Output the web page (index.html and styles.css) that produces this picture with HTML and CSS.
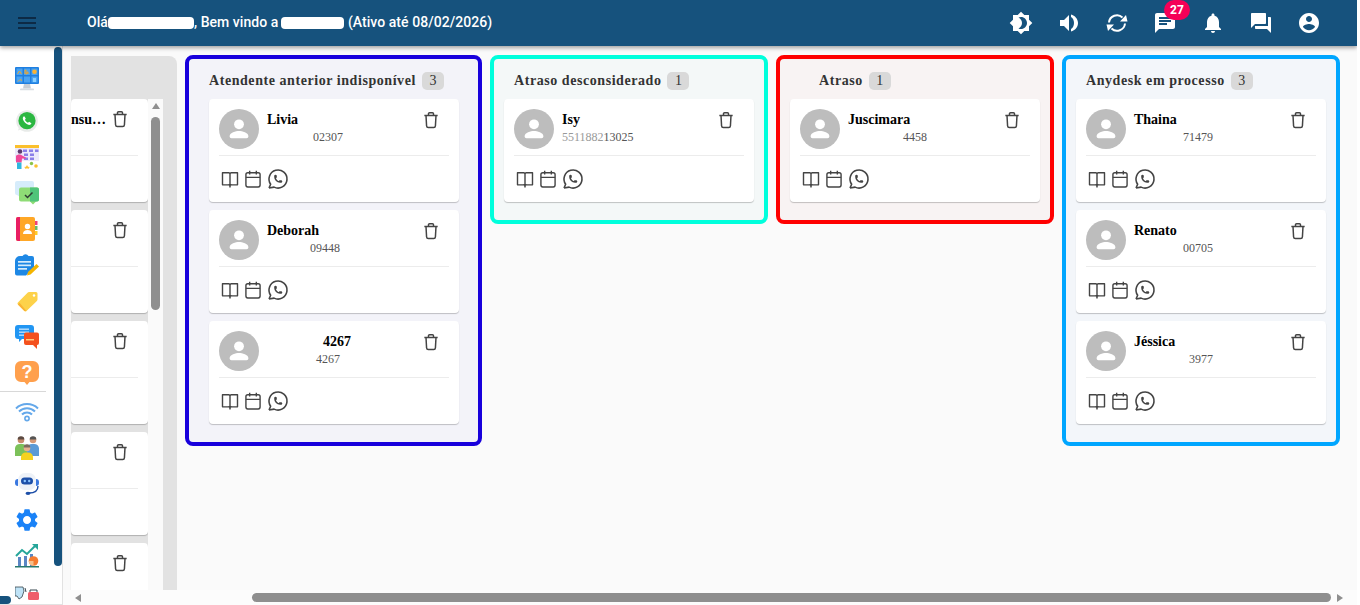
FILE: index.html
```html
<!DOCTYPE html>
<html lang="pt-BR">
<head>
<meta charset="utf-8">
<title>Kanban</title>
<link rel="stylesheet" href="styles.css">
</head>
<body>
<svg class="sprite" aria-hidden="true">
  <symbol id="i-trash" viewBox="0 0 24 24"><path d="M4 6.5h16M9 6.5V4.6A1.3 1.3 0 0 1 10.300 3.300h3.400A1.300 1.300 0 0 1 15 4.600v1.900M6 6.500l.7 12.700a2 2 0 0 0 2 1.800h6.600a2 2 0 0 0 2-1.800L18 6.500" fill="none" stroke="currentColor" stroke-width="1.800" stroke-linejoin="round"/></symbol>
  <symbol id="i-book" viewBox="0 0 24 24"><path d="M3 4.500h7.500A1.500 1.500 0 0 1 12 6v15.500a1.800 1.800 0 0 0-1.800-2.500H3zM21 4.500h-7.500A1.500 1.500 0 0 0 12 6v15.500a1.800 1.800 0 0 1 1.800-2.500H21z" fill="none" stroke="currentColor" stroke-width="1.700" stroke-linejoin="round"/></symbol>
  <symbol id="i-cal" viewBox="0 0 24 24"><rect x="3.500" y="4.500" width="17" height="17" rx="2.200" fill="none" stroke="currentColor" stroke-width="1.700"/><path d="M3.500 10h17M8 2v4.500M16 2v4.500" fill="none" stroke="currentColor" stroke-width="1.700"/></symbol>
  <symbol id="i-wa" viewBox="0 0 24 24"><path d="M3 21l1.650-3.800a9 9 0 1 1 3.400 2.900L3 21" fill="none" stroke="currentColor" stroke-width="1.600" stroke-linejoin="round"/><path d="M9 10a.5.5 0 0 0 1 0V9a.5.5 0 0 0-1 0v1a5 5 0 0 0 5 5h1a.5.5 0 0 0 0-1h-1a.5.5 0 0 0 0 1" fill="none" stroke="currentColor" stroke-width="1.600"/></symbol>
  <symbol id="i-person" viewBox="0 0 24 24"><circle cx="12" cy="8" r="4.200" fill="currentColor"/><path d="M4 18c0-2.800 5.300-4.200 8-4.200s8 1.400 8 4.200v.500a1.500 1.500 0 0 1-1.500 1.500h-13A1.500 1.500 0 0 1 4 18.500z" fill="currentColor"/></symbol>
</svg>

<div class="app">
  <header class="topbar">
    <button class="menu-btn" aria-label="Menu">
      <svg class="icon-24" viewBox="0 0 24 24"><path d="M3 18h18v-2H3v2zm0-5h18v-2H3v2zm0-7v2h18V6H3z" fill="currentColor"/></svg>
    </button>
    <div class="greeting">Olá<span class="blob blob-a"></span>, Bem vindo a<span class="blob blob-b"></span> (Ativo até 08/02/2026)</div>
    <nav class="top-icons">
      <span class="top-icon"><svg class="icon-24" viewBox="0 0 24 24"><path d="M20 8.690V4h-4.690L12 .690 8.690 4H4v4.690L.690 12 4 15.310V20h4.690L12 23.310 15.310 20H20v-4.690L23.310 12 20 8.690zM12 18c-.890 0-1.740-.200-2.500-.550C11.560 16.500 13 14.420 13 12s-1.440-4.500-3.500-5.450C10.260 6.200 11.110 6 12 6c3.310 0 6 2.690 6 6s-2.690 6-6 6z" fill="currentColor"/></svg></span>
      <span class="top-icon"><svg class="icon-24" viewBox="0 0 24 24"><path d="M3 9v6h4l5 5V4L7 9H3z" fill="currentColor"/><path d="M14 3.500c4 1 7 4.500 7 8.500s-3 7.500-7 8.500V18c2-1 3-3.500 3-6s-1-5-3-6z" fill="currentColor"/></svg></span>
      <span class="top-icon"><svg class="icon-24" viewBox="0 0 24 24"><path d="M4 11.500A8 8 0 0 1 17.500 6.500M20 12.500A8 8 0 0 1 6.500 17.500" fill="none" stroke="currentColor" stroke-width="2"/><path d="M15 10.500h7.500L21 4zM9 13.500H1.500L3 20z" fill="currentColor"/></svg></span>
      <span class="top-icon has-badge"><svg class="icon-24" viewBox="0 0 24 24"><path d="M20 2H4c-1.100 0-1.990.9-1.990 2L2 22l4-4h14c1.100 0 2-.9 2-2V4c0-1.100-.9-2-2-2zM6 9h12v2H6V9zm8 5H6v-2h8v2zm4-6H6V6h12v2z" fill="currentColor"/></svg><span class="badge">27</span></span>
      <span class="top-icon"><svg class="icon-24" viewBox="0 0 24 24"><path d="M12 22c1.100 0 2-.9 2-2h-4c0 1.100.89 2 2 2zm6-6v-5c0-3.070-1.640-5.640-4.500-6.320V4c0-.83-.67-1.500-1.500-1.500s-1.500.67-1.500 1.500v.68C7.630 5.360 6 7.920 6 11v5l-2 2v1h16v-1l-2-2z" fill="currentColor"/></svg></span>
      <span class="top-icon"><svg class="icon-24" viewBox="0 0 24 24"><path d="M21 6h-2v9H6v2c0 .55.45 1 1 1h11l4 4V7c0-.55-.45-1-1-1zm-4 6V3c0-.55-.45-1-1-1H3c-.55 0-1 .45-1 1v14l4-4h10c.55 0 1-.45 1-1z" fill="currentColor"/></svg></span>
      <span class="top-icon"><svg class="icon-24" viewBox="0 0 24 24"><path d="M12 2C6.480 2 2 6.480 2 12s4.480 10 10 10 10-4.480 10-10S17.520 2 12 2zm0 3c1.660 0 3 1.340 3 3s-1.340 3-3 3-3-1.340-3-3 1.340-3 3-3zm0 14.200c-2.500 0-4.710-1.280-6-3.220.03-1.990 4-3.080 6-3.080 1.990 0 5.970 1.090 6 3.080-1.290 1.940-3.500 3.220-6 3.220z" fill="currentColor"/></svg></span>
    </nav>
  </header>

  <div class="workspace">
    <aside class="sidebar">
      <div class="side-group">
        <svg class="side-icon si-first" viewBox="0 0 24 24"><rect x="0" y="0" width="24" height="17" rx="1" fill="#1f7fe0"/><g fill="#4aa3f2"><rect x="1.500" y="1.500" width="6" height="6.500"/><rect x="9" y="1.500" width="6" height="6.500"/><rect x="16.500" y="1.500" width="6" height="6.500"/><rect x="1.500" y="9.500" width="6" height="6"/><rect x="9" y="9.500" width="6" height="6"/><rect x="16.500" y="9.500" width="6" height="6"/></g><path d="M2.500 7l2-3 2 3M10 7V3h1v4h1V5h1v2M3 14.500l2-2 2 1" fill="none" stroke="#f5a623" stroke-width=".9"/><circle cx="19.500" cy="4.700" r="2.300" fill="#f9b233"/><rect x="18" y="11" width="3" height="4" fill="#8bd0ff"/><path d="M9 17h6l1 4.500H8z" fill="#c7ced6"/><rect x="5" y="21.500" width="14" height="1.800" rx=".9" fill="#d8dde2"/></svg>
        <svg class="side-icon" viewBox="0 0 24 24"><circle cx="12" cy="12" r="10.800" fill="#e8ebe9"/><path d="M3 21.500l1.600-5A9.200 9.200 0 1 1 8 20z" fill="#e8ebe9"/><circle cx="12" cy="11.700" r="8.600" fill="#2bb741"/><path d="M8.500 7.500c-1 1-1 2.800.4 4.800 1.500 2.100 3.500 3.600 5.300 3.600 1 0 2-.7 2.200-1.700l-2.300-1.400-1.100 1c-1.400-.6-2.500-1.800-3.100-3l.9-1.100L9.600 7.500z" fill="#fff"/></svg>
        <svg class="side-icon" viewBox="0 0 24 24"><rect x="0" y="0" width="24" height="3" fill="#fbc02d"/><rect x="0" y="3" width="24" height="13" fill="#ece9fb"/><g fill="#8b7fe8"><rect x="8" y="4.500" width="4" height="2.500"/><rect x="14" y="4.500" width="4" height="2.500"/><rect x="20" y="4.500" width="3.500" height="2.500"/><rect x="9" y="8.500" width="4" height="2.500"/><rect x="15" y="8.500" width="4" height="2.500"/><rect x="9" y="12.500" width="4" height="2.500"/><rect x="15" y="12.500" width="4" height="2.500"/></g><circle cx="5" cy="6.500" r="2.300" fill="#5b3a6e"/><path d="M1 11c1-2 5-2 6-.5l4 2-.6 1.200L7 13.500l-.4 4H1z" fill="#f0489a"/><rect x="2" y="17.500" width="4.500" height="6.500" fill="#30b8e0"/><path d="M12 20l1 1.700 2 .2-1.500 1.200.5 1-2-.8-2 .8.500-1-1.500-1.200 2-.2z" fill="#fbc02d"/><circle cx="16.500" cy="18.500" r="1.700" fill="#8bc34a"/><circle cx="21" cy="21" r="1.800" fill="#fbc02d"/></svg>
        <svg class="side-icon" viewBox="0 0 24 24"><path d="M2 0h15a2 2 0 0 1 2 2v8H5v6l-3-2a2 2 0 0 1-2-2V2a2 2 0 0 1 2-2z" fill="#d6ecfb"/><path d="M6 6.500h16a2 2 0 0 1 2 2v10a2 2 0 0 1-2 2h-1l-3 3-3-3H6a2 2 0 0 1-2-2v-10a2 2 0 0 1 2-2z" fill="#8fdc76"/><path d="M15 6.500h7a2 2 0 0 1 2 2v10a2 2 0 0 1-2 2h-7z" fill="#4fc47a"/><path d="M10 14l2.500 2.500 5-5" fill="none" stroke="#2f3d33" stroke-width="1.500"/></svg>
        <svg class="side-icon" viewBox="0 0 24 24"><rect x="1" y="0" width="19" height="24" rx="2" fill="#ffa726"/><path d="M3 0h2v24H3a2 2 0 0 1-2-2V2a2 2 0 0 1 2-2z" fill="#e91e63"/><rect x="20" y="4" width="2.500" height="4" fill="#ec407a"/><rect x="20" y="9" width="2.500" height="4" fill="#66bb6a"/><rect x="20" y="14" width="2.500" height="4" fill="#ffca28"/><circle cx="12.500" cy="9.500" r="2.700" fill="#fff"/><path d="M8 17c0-3 2-4 4.500-4s4.500 1 4.500 4z" fill="#fff"/></svg>
        <svg class="side-icon" viewBox="0 0 24 24"><path d="M5 3h2.500a3.500 3.500 0 0 1 6 0H17a2 2 0 0 1 2 2v9.500L11 22.500H2a2 2 0 0 1-2-2V8a5 5 0 0 1 5-5z" fill="#1e88e5"/><g fill="#d6ecfb"><rect x="3" y="8" width="13" height="1.700"/><rect x="3" y="11.500" width="13" height="1.700"/><rect x="3" y="15" width="9" height="1.700"/></g><path d="M12 22.500l1-3.500 8.500-8 2.500 2.500-8.500 8z" fill="#f4b400"/></svg>
        <svg class="side-icon" viewBox="0 0 24 24"><path d="M14 3h7a1.500 1.500 0 0 1 1.500 1.500v6a2 2 0 0 1-.6 1.400L11.500 22a1.500 1.500 0 0 1-2.100 0l-6.500-6.500a1.500 1.500 0 0 1 0-2.100L12.800 3.500A2 2 0 0 1 14 3z" fill="#fdd24a"/><path d="M2.900 15.500l6.500 6.500 2.100 0L4.500 13.800z" fill="#f9b233"/><circle cx="19" cy="6.500" r="1.200" fill="#fff"/></svg>
        <svg class="side-icon" viewBox="0 0 24 24"><path d="M3 0h13a3 3 0 0 1 3 3v8a3 3 0 0 1-3 3H7l-3 3v-3H3a3 3 0 0 1-3-3V3a3 3 0 0 1 3-3z" fill="#2196f3"/><g fill="#bbdefb"><rect x="4" y="3.500" width="10" height="1.400"/><rect x="4" y="6.500" width="10" height="1.400"/><rect x="4" y="9.500" width="8" height="1.400"/></g><path d="M11 7.500h11a2 2 0 0 1 2 2V18a2 2 0 0 1-2 2v4l-4-4h-7a2 2 0 0 1-2-2V9.500a2 2 0 0 1 2-2z" fill="#f4511e"/><g fill="#ffcc80"><rect x="11" y="14" width="8" height="1.500"/></g></svg>
        <svg class="side-icon" viewBox="0 0 24 24"><path d="M6 0h12a6 6 0 0 1 6 6v9a6 6 0 0 1-6 6h-3.500L12 24l-2.500-3H6a6 6 0 0 1-6-6V6a6 6 0 0 1 6-6z" fill="#ffa04d"/><text x="12" y="17" class="q-mark">?</text></svg>
      </div>
      <div class="side-rule"></div>
      <div class="side-group side-group-b">
        <svg class="side-icon" viewBox="0 0 24 24"><path d="M1 8.500a16 16 0 0 1 22 0M4 11.500a11.500 11.500 0 0 1 16 0M7 14.500a7 7 0 0 1 10 0" fill="none" stroke="#64a8ea" stroke-width="2"/><circle cx="12" cy="18.500" r="2.100" fill="none" stroke="#64a8ea" stroke-width="1.600"/></svg>
        <svg class="side-icon" viewBox="0 0 24 24"><circle cx="6" cy="4" r="3.300" fill="#c98c6c"/><path d="M2.700 3.500a3.300 3.300 0 0 1 6.600 0z" fill="#5b4a42"/><path d="M0 12a5 5 0 0 1 5-4h2a5 5 0 0 1 5 4v8H0z" fill="#7cc15a"/><circle cx="18" cy="4" r="3.300" fill="#d69a77"/><path d="M14.700 3.500a3.300 3.300 0 0 1 6.600 0z" fill="#555"/><path d="M12 12a5 5 0 0 1 5-4h2a5 5 0 0 1 5 4v8H12z" fill="#5c9bd6"/><circle cx="12" cy="12" r="3.300" fill="#e7b08f"/><path d="M8.700 11.500a3.300 3.300 0 0 1 6.600 0z" fill="#7b6a60"/><path d="M6 24v-3a5 5 0 0 1 5-4.500h2a5 5 0 0 1 5 4.500v3z" fill="#f6d21f"/></svg>
        <svg class="side-icon" viewBox="0 0 24 24"><path d="M0 10a3 3 0 0 1 3-3v7a3 3 0 0 1-3-3zM24 10a3 3 0 0 0-3-3v7a3 3 0 0 0 3-3z" fill="#3a78e0"/><rect x="3" y="1" width="18" height="17" rx="7" fill="#eef2f8"/><rect x="6" y="5.500" width="12" height="7" rx="3.500" fill="#1d4fa8"/><circle cx="9.800" cy="9" r="1.200" fill="#8cc6ff"/><circle cx="14.200" cy="9" r="1.200" fill="#8cc6ff"/><path d="M23 14c0 5-4 7-9 7" fill="none" stroke="#1d4fa8" stroke-width="1.400"/><ellipse cx="13" cy="21.300" rx="2.500" ry="1.600" fill="#1d4fa8"/></svg>
        <svg class="side-icon" viewBox="0 0 24 24"><path d="M19.140 12.940c.04-.3.06-.61.06-.94 0-.32-.02-.64-.07-.94l2.030-1.580c.18-.14.23-.41.12-.61l-1.920-3.320c-.12-.22-.37-.29-.59-.22l-2.390.96c-.5-.38-1.030-.7-1.620-.94l-.36-2.540c-.04-.24-.24-.41-.48-.41h-3.840c-.24 0-.43.17-.47.41l-.36 2.540c-.59.24-1.130.57-1.620.94l-2.390-.96c-.22-.08-.47 0-.59.22L2.740 8.870c-.12.21-.08.47.12.61l2.030 1.580c-.05.3-.09.63-.09.94s.02.64.07.94l-2.030 1.580c-.18.14-.23.41-.12.61l1.920 3.320c.12.22.37.29.59.22l2.390-.96c.5.38 1.030.7 1.620.94l.36 2.540c.05.24.24.41.48.41h3.840c.24 0 .44-.17.47-.41l.36-2.540c.59-.24 1.130-.56 1.620-.94l2.390.96c.22.08.47 0 .59-.22l1.920-3.320c.12-.22.07-.47-.12-.61l-2.010-1.580zM12 15.600c-1.980 0-3.600-1.620-3.600-3.600s1.620-3.600 3.600-3.600 3.600 1.620 3.600 3.600-1.620 3.600-3.600 3.600z" fill="#1a82f7" transform="translate(-1.400 -1.400) scale(1.120)"/></svg>
        <svg class="side-icon" viewBox="0 0 24 24"><path d="M1 12l6-6 5 4 8-8" fill="none" stroke="#26a69a" stroke-width="2"/><path d="M17 0h6v6z" fill="#26a69a"/><g fill="#5b86c4"><rect x="3" y="13" width="3" height="9"/><rect x="9" y="12" width="3" height="10"/><rect x="15" y="10" width="3" height="12"/></g><rect x="0" y="22" width="24" height="1.500" fill="#26786f"/><circle cx="18.500" cy="17" r="4.800" fill="#f57c30"/><path d="M18.500 17v4.800a4.800 4.800 0 0 1-4.800-4.800z" fill="#f6c08a"/></svg>
        <svg class="side-icon si-last" viewBox="0 0 24 24"><path d="M0 1h8l1 4-2 6-3 2-2-3H0z" fill="#bfe3f7" stroke="#37474f" stroke-width=".8"/><path d="M10 2l1 4" stroke="#37474f" stroke-width="1"/><rect x="13" y="6" width="11" height="8" rx="1.500" fill="#ef5f6b"/><path d="M15 6V4h7v2" fill="none" stroke="#37474f" stroke-width="1"/></svg>
      </div>
      <div class="side-vthumb"></div>
      <div class="side-hthumb"></div>
    </aside>

    <main class="main">
      <div class="board">
        <section class="col-partial">
          <div class="partial-list">
            <article class="card partial-card"><div class="partial-row"><span class="name">nsu…</span><svg class="icon-trash"><use href="#i-trash"/></svg></div><div class="rule"></div></article>
            <article class="card partial-card"><div class="partial-row partial-row-end"><svg class="icon-trash"><use href="#i-trash"/></svg></div><div class="rule"></div></article>
            <article class="card partial-card"><div class="partial-row partial-row-end"><svg class="icon-trash"><use href="#i-trash"/></svg></div><div class="rule"></div></article>
            <article class="card partial-card"><div class="partial-row partial-row-end"><svg class="icon-trash"><use href="#i-trash"/></svg></div><div class="rule"></div></article>
            <article class="card partial-card"><div class="partial-row partial-row-end"><svg class="icon-trash"><use href="#i-trash"/></svg></div><div class="rule"></div></article>
          </div>
          <div class="partial-scroll"><span class="arrow-up"></span><span class="partial-thumb"></span></div>
        </section>

        <section class="col col-blue">
          <h2 class="col-title"><span>Atendente anterior indisponível</span><span class="count">3</span></h2>
          <article class="card"><div class="card-top"><div class="avatar"><svg><use href="#i-person"/></svg></div><div class="who"><div class="name">Livia</div><div class="phone"><span class="gap g46"></span>02307</div></div><svg class="icon-trash"><use href="#i-trash"/></svg></div><div class="rule"></div><div class="acts"><svg class="act"><use href="#i-book"/></svg><svg class="act"><use href="#i-cal"/></svg><svg class="act-wa"><use href="#i-wa"/></svg></div></article>
          <article class="card"><div class="card-top"><div class="avatar"><svg><use href="#i-person"/></svg></div><div class="who"><div class="name">Deborah</div><div class="phone"><span class="gap g43"></span>09448</div></div><svg class="icon-trash"><use href="#i-trash"/></svg></div><div class="rule"></div><div class="acts"><svg class="act"><use href="#i-book"/></svg><svg class="act"><use href="#i-cal"/></svg><svg class="act-wa"><use href="#i-wa"/></svg></div></article>
          <article class="card"><div class="card-top"><div class="avatar"><svg><use href="#i-person"/></svg></div><div class="who"><div class="name"><span class="gap g56"></span>4267</div><div class="phone"><span class="gap g49"></span>4267</div></div><svg class="icon-trash"><use href="#i-trash"/></svg></div><div class="rule"></div><div class="acts"><svg class="act"><use href="#i-book"/></svg><svg class="act"><use href="#i-cal"/></svg><svg class="act-wa"><use href="#i-wa"/></svg></div></article>
        </section>

        <section class="col col-teal">
          <h2 class="col-title indent-10"><span>Atraso desconsiderado</span><span class="count">1</span></h2>
          <article class="card"><div class="card-top"><div class="avatar"><svg><use href="#i-person"/></svg></div><div class="who"><div class="name">Isy</div><div class="phone"><span class="faint">5511882</span>13025</div></div><svg class="icon-trash"><use href="#i-trash"/></svg></div><div class="rule"></div><div class="acts"><svg class="act"><use href="#i-book"/></svg><svg class="act"><use href="#i-cal"/></svg><svg class="act-wa"><use href="#i-wa"/></svg></div></article>
        </section>

        <section class="col col-red">
          <h2 class="col-title indent-29"><span>Atraso</span><span class="count">1</span></h2>
          <article class="card"><div class="card-top"><div class="avatar"><svg><use href="#i-person"/></svg></div><div class="who"><div class="name">Juscimara</div><div class="phone"><span class="gap g55"></span>4458</div></div><svg class="icon-trash"><use href="#i-trash"/></svg></div><div class="rule"></div><div class="acts"><svg class="act"><use href="#i-book"/></svg><svg class="act"><use href="#i-cal"/></svg><svg class="act-wa"><use href="#i-wa"/></svg></div></article>
        </section>

        <section class="col col-sky">
          <h2 class="col-title indent-10"><span>Anydesk em processo</span><span class="count">3</span></h2>
          <article class="card"><div class="card-top"><div class="avatar"><svg><use href="#i-person"/></svg></div><div class="who"><div class="name">Thaina</div><div class="phone"><span class="gap g49"></span>71479</div></div><svg class="icon-trash"><use href="#i-trash"/></svg></div><div class="rule"></div><div class="acts"><svg class="act"><use href="#i-book"/></svg><svg class="act"><use href="#i-cal"/></svg><svg class="act-wa"><use href="#i-wa"/></svg></div></article>
          <article class="card"><div class="card-top"><div class="avatar"><svg><use href="#i-person"/></svg></div><div class="who"><div class="name">Renato</div><div class="phone"><span class="gap g49"></span>00705</div></div><svg class="icon-trash"><use href="#i-trash"/></svg></div><div class="rule"></div><div class="acts"><svg class="act"><use href="#i-book"/></svg><svg class="act"><use href="#i-cal"/></svg><svg class="act-wa"><use href="#i-wa"/></svg></div></article>
          <article class="card"><div class="card-top"><div class="avatar"><svg><use href="#i-person"/></svg></div><div class="who"><div class="name">Jéssica</div><div class="phone"><span class="gap g55"></span>3977</div></div><svg class="icon-trash"><use href="#i-trash"/></svg></div><div class="rule"></div><div class="acts"><svg class="act"><use href="#i-book"/></svg><svg class="act"><use href="#i-cal"/></svg><svg class="act-wa"><use href="#i-wa"/></svg></div></article>
        </section>
      </div>
      <div class="hscroll"><span class="arrow-left"></span><span class="hthumb"></span><span class="arrow-right"></span></div>
    </main>
  </div>
</div>
</body>
</html>
```

FILE: styles.css
```css
* { box-sizing: border-box; }
html, body { margin: 0; padding: 0; background: #fff; }
.sprite { display: none; }
.app { width: 1357px; height: 605px; overflow: hidden; display: flex; flex-direction: column; position: relative; }

.topbar {
  height: 46px; flex: none; display: flex; align-items: center;
  background: #16527d; color: #fff; position: relative; z-index: 2;
  box-shadow: 0 2px 4px rgba(0,0,0,.35);
  padding-left: 15px; padding-right: 36px;
}
.menu-btn { width: 24px; height: 24px; padding: 0; border: 0; background: none; color: #0d2a45; flex: none; }
.icon-24 { width: 24px; height: 24px; display: block; }
.greeting { margin-left: 48px; font: 500 14px/20px Roboto, sans-serif; letter-spacing: .05px; white-space: nowrap; margin-top: -3px; }
.blob { display: inline-block; height: 12px; background: #fff; border-radius: 4px; vertical-align: -2px; }
.blob-a { width: 86px; }
.blob-b { width: 63px; margin-left: 3px; }
.top-icons { margin-left: auto; display: flex; gap: 24px; }
.top-icon { position: relative; width: 24px; height: 24px; display: block; }
.badge {
  position: absolute; left: 11px; top: -11px; width: 26px; height: 20px; border-radius: 10px;
  background: #f50057; color: #fff; font: 700 12px/20px Roboto, sans-serif; text-align: center;
}

.workspace { flex: 1; min-height: 0; display: flex; }
.sidebar {
  width: 63px; flex: none; height: 559px; background: #fff; position: relative; overflow: hidden;
  border-right: 1px solid #e2e2e2; border-bottom: 1px solid #e2e2e2;
  padding: 21px 0 0 15px;
}
.side-group { display: flex; flex-direction: column; gap: 12px; width: 24px; }
.side-group-b { margin-top: 8px; }
.side-icon { width: 24px; height: 24px; display: block; flex: none; }
.si-first { margin-bottom: 6px; }
.si-last { margin-top: 6px; }
.q-mark { font: 700 18px "Liberation Sans", sans-serif; fill: #fff; text-anchor: middle; }
.side-rule { width: 46px; height: 1px; background: #d8d8d8; margin: 6px 0 0 -15px; }
.side-vthumb { position: absolute; left: 54px; top: 1px; width: 8px; height: 519px; background: #16527d; border-radius: 4px; }
.side-hthumb { position: absolute; left: -4px; bottom: 0; width: 15px; height: 8px; background: #16527d; border-radius: 4px; }

.main { flex: none; width: 1294px; display: flex; flex-direction: column; background: #fafafa; }
.board { flex: 1; min-height: 0; display: flex; align-items: flex-start; gap: 8px; padding: 9px 0 0 8px; overflow: hidden; }
.hscroll { height: 15px; flex: none; display: flex; align-items: center; padding-left: 12px; background: #fcfcfc; }
.hthumb { width: 1079px; height: 9px; border-radius: 5px; background: #8f8f8f; margin: 0 6px 0 171px; }
.arrow-left { width: 0; height: 0; border: 4px solid transparent; border-left: 0; border-right: 6px solid #8f8f8f; }
.arrow-right { width: 0; height: 0; border: 4px solid transparent; border-right: 0; border-left: 6px solid #8f8f8f; }

.col-partial {
  width: 106px; flex: none; height: 535px; margin-top: 1px; display: flex; align-items: flex-start;
  background: #e2e2e2; border-radius: 0 8px 0 0; padding: 43px 14px 0 0;
}
.partial-list { width: 77px; flex: none; display: flex; flex-direction: column; gap: 8px; }
.partial-scroll { width: 15px; height: 491px; flex: none; background: #fafafa; display: flex; flex-direction: column; align-items: center; padding-top: 4px; }
.arrow-up { width: 0; height: 0; border: 4px solid transparent; border-top: 0; border-bottom: 6px solid #8f8f8f; }
.partial-thumb { width: 9px; height: 193px; margin-top: 8px; border-radius: 5px; background: #8f8f8f; flex: none; }

.col { flex: none; width: 278px; border: 4px solid; border-radius: 8px; padding: 0 10px 18px; display: flex; flex-direction: column; gap: 8px; }
.col-blue { width: 297px; padding-left: 20px; padding-right: 19px; border-color: #1800dc; background: #f3f3f9; }
.col-teal { border-color: #00ffdc; background: #f4f8f8; }
.col-red { border-color: #ff0000; background: #f8f3f3; }
.col-sky { border-color: #00a6ff; background: #f3f6fa; }
.col-title { height: 40px; margin: 0 0 -8px; padding-top: 3px; display: flex; align-items: center; gap: 6px; font: 700 14px/18px "Liberation Serif", serif; letter-spacing: .56px; color: #333; }
.indent-10 { padding-left: 10px; }
.indent-29 { padding-left: 29px; }
.count { width: 22px; height: 18px; border-radius: 5px; background: #d9d9d9; font-weight: 400; font-size: 14px; text-align: center; letter-spacing: 0; }

.card { width: 250px; height: 103px; flex: none; background: #fff; border-radius: 4px; box-shadow: 0 1px 1px rgba(0,0,0,.22); padding: 10px 10px 0; overflow: hidden; color: #444; }
.card-top { display: flex; align-items: flex-start; height: 46px; }
.avatar { width: 40px; height: 40px; border-radius: 50%; background: #bdbdbd; color: #fff; flex: none; }
.avatar svg { width: 40px; height: 40px; display: block; padding: 6px; }
.who { margin-left: 8px; flex: 1; min-width: 0; font-family: "Liberation Serif", serif; }
.name { font: 700 14px/18px "Liberation Serif", serif; color: #000; height: 17px; white-space: nowrap; margin-top: 2px; }
.phone { font-size: 12px; line-height: 18px; color: #555; white-space: nowrap; }
.faint { color: #999; }
.gap { display: inline-block; }
.g43 { width: 43px; } .g46 { width: 46px; } .g49 { width: 49px; } .g55 { width: 55px; } .g56 { width: 56px; }
.icon-trash { width: 20px; height: 20px; flex: none; margin: 1px 8px 0 0; color: #444; display: block; }
.rule { height: 1px; background: #ececec; }
.acts { display: flex; align-items: center; gap: 3px; margin-top: 11px; padding-left: 1px; }
.act { width: 20px; height: 20px; color: #444; flex: none; }
.act-wa { width: 24px; height: 24px; color: #444; flex: none; }

.partial-card { width: 77px; padding: 0; }
.partial-row { height: 56px; display: flex; align-items: flex-start; justify-content: space-between; padding: 10px 18px 0 0; }
.partial-row-end { justify-content: flex-end; }
.partial-row .icon-trash { margin: 0; }
.partial-card .rule { margin: 0 10px 0 0; }
```
